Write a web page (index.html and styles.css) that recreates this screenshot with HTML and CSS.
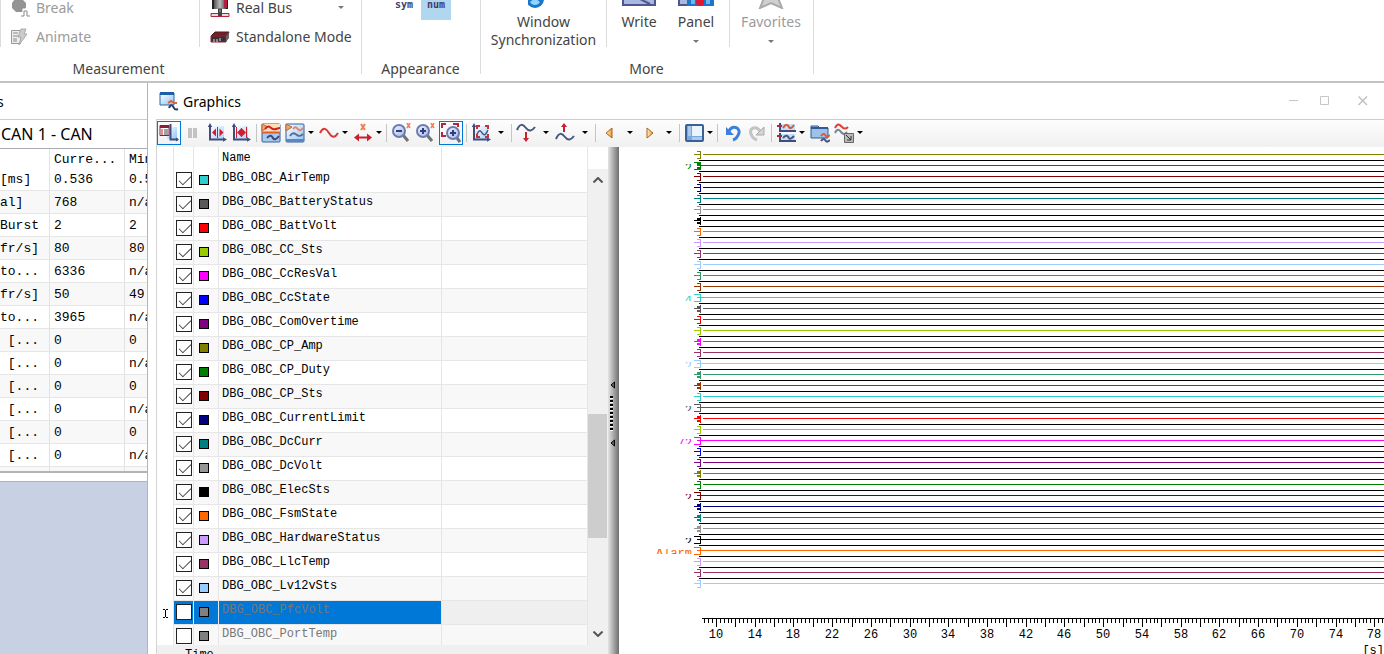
FILE: index.html
```html
<!DOCTYPE html>
<html lang="en">
<head>
<meta charset="utf-8">
<title>Graphics</title>
<link rel="stylesheet" href="styles.css">
</head>
<body>
<svg class="defs" width="0" height="0" aria-hidden="true">
  <defs>
    <linearGradient id="blue" x1="0" y1="0" x2="1" y2="1"><stop offset="0" stop-color="#ffffff"/><stop offset="1" stop-color="#8fc3f5"/></linearGradient>
    <linearGradient id="lens" x1="0" y1="0" x2="1" y2="1"><stop offset="0" stop-color="#f4f7ff"/><stop offset="1" stop-color="#a3b5e0"/></linearGradient>
    <linearGradient id="gold" x1="0" y1="0" x2="1" y2="0"><stop offset="0" stop-color="#fff0c8"/><stop offset="1" stop-color="#ef9a2e"/></linearGradient>
    <linearGradient id="steel" x1="0" y1="0" x2="1" y2="0"><stop offset="0" stop-color="#444"/><stop offset=".5" stop-color="#bbb"/><stop offset="1" stop-color="#333"/></linearGradient>
    <symbol id="axes" viewBox="0 0 20 20"><path d="M3 3h14v13H3z" fill="url(#blue)" opacity=".7"/><path d="M3 2v14.500h14" fill="none" stroke="#3f4d7e" stroke-width="2"/><path d="M3 0L0.800 4h4.400zM20 16.500l-4-2.200v4.400z" fill="#3f4d7e"/></symbol>
  </defs>
</svg>
<header class="ribbon">
  <section class="group group-measure">
    <div class="group-body">
      <span class="rule rule-first"></span>
      <div class="stack stack-left">
        <button class="tool off" disabled><svg width="20" height="20" viewBox="0 0 20 20"><path d="M5 1h7l4 4v5l-4 4H6l-4-4V5z" fill="#949494"/><path d="M11 18h3v-6h3v6h3" fill="none" stroke="#fff" stroke-width="3"/><path d="M11 18h3v-5h3v5h3" fill="none" stroke="#888"/></svg>Break</button>
        <button class="tool off" disabled><svg width="20" height="20" viewBox="0 0 20 20"><path d="M1.500 3.500h9v13h-9z" fill="#eee" stroke="#999"/><path d="M3 6h5M3 9h5M3 12h4M3 14h4" stroke="#888"/><path d="M11 2h5l-2 5h3l-8 11 2-8H8z" fill="#ccc" stroke="#aaa"/></svg>Animate</button>
      </div>
      <span class="rule"></span>
      <div class="stack stack-right">
        <button class="tool wide"><svg width="20" height="20" viewBox="0 0 20 20"><path d="M3 0h14v11H3z" fill="url(#steel)"/><path d="M3 0v11M17 0v11" stroke="#222" stroke-width="2"/><path d="M14 1h3v9h-3z" fill="#b61c3e"/><path d="M8.500 11h3v6h-3z" fill="#777" stroke="#333"/><path d="M1 15.500h18v3H1z" fill="#ddd" stroke="#b8203f"/><path d="M8 14h4v4H8z" fill="#444"/></svg>Real Bus<i class="caret"></i></button>
        <button class="tool"><svg width="20" height="20" viewBox="0 0 20 20"><path d="M1 9l4-4h14l-2 4z" fill="#7b1b30" stroke="#421"/><path d="M1 9h15v6H1z" fill="#333" stroke="#a31c3c"/><path d="M16 9l3-4v6l-3 4z" fill="#666"/><path d="M4 12v3M7 12v3M10 11v3" stroke="#ddd"/></svg>Standalone Mode</button>
      </div>
    </div>
    <h2>Measurement</h2>
  </section>
  <section class="group group-look">
    <div class="group-body look"><button class="mode">sym</button><button class="mode picked">num</button></div>
    <h2>Appearance</h2>
  </section>
  <section class="group group-more">
    <div class="group-body">
      <button class="big big-sync"><svg width="32" height="32" viewBox="0 0 32 32"><circle cx="7" cy="22" r="9" fill="#1c76c8"/><path d="M2 25c2 4 8 4 10 0l-5-4z" fill="#8fd5ff"/></svg><span>Window</span><span>Synchronization</span></button>
      <span class="rule"></span>
      <button class="big big-write"><svg width="34" height="32" viewBox="0 0 34 32"><path d="M1 4h32v24H1z" fill="#a9b8e0" stroke="#4d578e" stroke-width="2"/><path d="M18 22l10 5" stroke="#4d578e" stroke-width="2"/></svg><span>Write</span><span></span></button>
      <button class="big big-panel"><svg width="36" height="32" viewBox="0 0 36 32"><path d="M1 10h10v18H1z" fill="#a9b8e0" stroke="#4d578e" stroke-width="2"/><path d="M9 4h27v25H9z" fill="#1e74c6"/><circle cx="22" cy="25" r="4" fill="#e5172f"/><path d="M13 23h4v4h-4zM28 23h4v4h-4z" fill="#69b8f1"/></svg><span>Panel</span><span><i class="caret"></i></span></button>
      <span class="rule"></span>
      <button class="big big-fav off" disabled><svg width="32" height="32" viewBox="0 0 32 32"><path d="M16 4l4 9 10 1-7 7 4 10-11-5-11 5 4-10-7-7 10-1z" fill="#d0d0d0" stroke="#aaa" stroke-width="2"/></svg><span>Favorites</span><span><i class="caret"></i></span></button>
    </div>
    <h2>More</h2>
  </section>
</header>

<main class="desk">
  <aside class="side">
    <div class="side-title">s</div>
    <div class="side-channel">CAN 1 - CAN</div>
    <div class="stats-box">
      <table class="stats">
        <colgroup><col class="c-label"><col class="c-cur"><col class="c-min"></colgroup>
        <thead><tr><th></th><th>Curre...</th><th>Min</th></tr></thead>
        <tbody id="stats"></tbody>
      </table>
    </div>
    <div class="side-gap"></div>
    <div class="side-back"></div>
  </aside>

  <section class="window">
    <header class="titlebar">
      <svg width="20" height="20" viewBox="0 0 20 20"><path d="M1 2h14v12H1z" fill="url(#blue)" stroke="#2b67a8"/><path d="M1 1h14v3H1z" fill="#1c5fa8"/><path d="M9 12l3-2 3 2 3 0" fill="none" stroke="#e0622e" stroke-width="2"/><path d="M10 17c2-5 4-2 5 0s2 2 4 1" fill="none" stroke="#34406e" stroke-width="2"/></svg>
      <h1>Graphics</h1>
      <button class="sys" aria-label="Minimize"><svg width="10" height="10"><path d="M0 4.500h9" stroke="#c6c6c6"/></svg></button>
      <button class="sys" aria-label="Maximize"><svg width="10" height="10"><path d="M.5.5h8v8h-8z" fill="none" stroke="#c6c6c6"/></svg></button>
      <button class="sys sys-close" aria-label="Close"><svg width="10" height="10"><path d="M.5.5l8.500 8.500M9 .5L.5 9" stroke="#c0c0c0" stroke-width="1.500"/></svg></button>
    </header>

    <nav class="toolbar" aria-label="Graphics tools">
      <button class="ico on" aria-label="Legend"><svg width="20" height="20" viewBox="0 0 20 20"><path d="M8 4h10v12H8z" fill="url(#blue)"/><path d="M1 2.500h9v10H1z" fill="#fff" stroke="#8d1d36"/><path d="M1 2h9v3H1z" fill="#8d1d36"/><path d="M2 7h2M2 9h2M2 11h2" stroke="#c22"/><path d="M5 7h4M5 9h4M5 11h4" stroke="#445"/><path d="M11.500 1v15.500H19" fill="none" stroke="#3f4d7e" stroke-width="2"/><path d="M20 16.500l-3-2v4z" fill="#3f4d7e"/></svg></button>
      <button class="ico" aria-label="Pause"><svg width="20" height="20" viewBox="0 0 20 20"><path d="M5 5h4v10H5zM10 5h4v10h-4z" fill="#c3c3c3"/></svg></button>
      <button class="ico" aria-label="Fit"><svg width="20" height="20" viewBox="0 0 20 20"><use href="#axes"/><path d="M10.500 4v11" stroke="#cc1f2f" stroke-width="1"/><path d="M5 9.500l4-4v8zM16.500 9.500l-4-4v8z" fill="#cc1f2f"/></svg></button>
      <button class="ico" aria-label="Fit all"><svg width="20" height="20" viewBox="0 0 20 20"><use href="#axes"/><path d="M5.500 4v11M15.500 4v11M10.500 5v9" stroke="#cc1f2f"/><path d="M6 9.500l4-4v8zM15 9.500l-4-4v8z" fill="#cc1f2f"/></svg></button>
      <span class="sep"></span>
      <button class="ico" aria-label="Separate"><svg width="20" height="20" viewBox="0 0 20 20"><rect x="1" y="1" width="18" height="18" rx="1" fill="#a9c9ee" stroke="#355e96"/><path d="M1 1h18v8H1z" fill="#ffe0b4"/><path d="M1 1l6 3-6 4z" fill="#f4ad45" stroke="#a66"/><path d="M1 9.500h18" stroke="#e25a28" stroke-width="2"/><path d="M4 6c4-5 5-1 8 0s4-1 7-1" fill="none" stroke="#cf2325" stroke-width="2"/><path d="M6 15c3-4 5-2 6 0s3 2 6-2" fill="none" stroke="#3a4878" stroke-width="2"/></svg></button>
      <button class="ico" aria-label="Combined"><svg width="20" height="20" viewBox="0 0 20 20"><rect x="1" y="1" width="18" height="18" rx="1" fill="url(#blue)" stroke="#355e96"/><path d="M1 16h18v3H1z" fill="#5a87bd"/><path d="M1 1l6 3-6 4z" fill="#f4ad45" stroke="#a66"/><path d="M8 6c3-4 4 0 6 1s3-1 4-2" fill="none" stroke="#d68a7a" stroke-width="2"/><path d="M5 13c3-5 5-2 7-1s3 2 6-1" fill="none" stroke="#5a6b9b" stroke-width="2"/></svg></button>
      <button class="drop" aria-label="View options"></button>
      <button class="ico gap" aria-label="Line type"><svg width="20" height="20" viewBox="0 0 20 20"><path d="M1 10C4 4 7 5 10 10s6 5 9 0" fill="none" stroke="#d93a38" stroke-width="2"/></svg></button>
      <button class="drop" aria-label="Line options"></button>
      <button class="ico gap" aria-label="X axis"><svg width="20" height="20" viewBox="0 0 20 20"><path d="M8 1l4 6M12 1L8 7" stroke="#f37c50" stroke-width="2"/><path d="M4 14.500h13" stroke="#c91f2e" stroke-width="2"/><path d="M1 14.500l5-4v8zM19 14.500l-5-4v8z" fill="#c91f2e"/></svg></button>
      <button class="drop" aria-label="X axis options"></button>
      <span class="sep"></span>
      <button class="ico" aria-label="Zoom out"><svg width="20" height="20" viewBox="0 0 20 20"><path d="M12 12l5 6" stroke="#6f7278" stroke-width="3"/><circle cx="8" cy="8" r="6" fill="url(#lens)" stroke="#6a7cb2" stroke-width="2"/><path d="M5 8h6" stroke="#2c3f86" stroke-width="2"/><path d="M16 0l3 5M19 0l-3 5" stroke="#f37c50" stroke-width="1.500"/></svg></button>
      <button class="ico" aria-label="Zoom in"><svg width="20" height="20" viewBox="0 0 20 20"><path d="M12 12l5 6" stroke="#6f7278" stroke-width="3"/><circle cx="8" cy="8" r="6" fill="url(#lens)" stroke="#6a7cb2" stroke-width="2"/><path d="M5 8h6M8 5v6" stroke="#2c3f86" stroke-width="2"/><path d="M16 0l3 5M19 0l-3 5" stroke="#f37c50" stroke-width="1.500"/></svg></button>
      <button class="ico on gap" aria-label="Zoom area"><svg width="20" height="20" viewBox="0 0 20 20"><path d="M1 5V1h4M12 1h5v3M1 9v4h4" fill="none" stroke="#b3263f" stroke-width="2"/><path d="M16 15l3 4" stroke="#6f7278" stroke-width="3"/><circle cx="12" cy="10" r="6" fill="url(#lens)" stroke="#6a7cb2" stroke-width="2"/><path d="M9 10h6M12 7v6" stroke="#2c3f86" stroke-width="2"/></svg></button>
      <span class="sep"></span>
      <button class="ico" aria-label="Measure area"><svg width="20" height="20" viewBox="0 0 20 20"><use href="#axes"/><path d="M6 6V3h3M14 3h3v3M6 11v3h3M14 14h3v-3" fill="none" stroke="#c73042" stroke-width="2"/><path d="M6 11c3-6 4-2 6 0s3 0 5-4" fill="none" stroke="#45547f" stroke-width="1.500"/></svg></button>
      <button class="drop far" aria-label="Area options"></button>
      <span class="sep"></span>
      <button class="ico" aria-label="Shift down"><svg width="20" height="20" viewBox="0 0 20 20"><path d="M1 7C4 0 7 1 10 5s6 3 9-1" fill="none" stroke="#47547f" stroke-width="2"/><path d="M10 9v6" stroke="#c8202c" stroke-width="2"/><path d="M10 19l-3-4h6z" fill="#c8202c"/></svg></button>
      <button class="drop far" aria-label="Shift down options"></button>
      <button class="ico" aria-label="Shift up"><svg width="20" height="20" viewBox="0 0 20 20"><path d="M1 16c3-7 6-6 9-2s6 3 9-1" fill="none" stroke="#47547f" stroke-width="2"/><path d="M9 4v5" stroke="#c8202c" stroke-width="2"/><path d="M9 0l3 4H6z" fill="#c8202c"/></svg></button>
      <button class="drop far" aria-label="Shift up options"></button>
      <span class="sep"></span>
      <button class="ico" aria-label="Previous"><svg width="20" height="20" viewBox="0 0 20 20"><path d="M12 5v10l-6-5z" fill="url(#gold)" stroke="#a8641c"/></svg></button>
      <button class="drop far" aria-label="Previous options"></button>
      <button class="ico" aria-label="Next"><svg width="20" height="20" viewBox="0 0 20 20"><path d="M8 5v10l6-5z" fill="url(#gold)" stroke="#a8641c"/></svg></button>
      <button class="drop far" aria-label="Next options"></button>
      <span class="sep"></span>
      <button class="ico" aria-label="Layout"><svg width="20" height="20" viewBox="0 0 20 20"><rect x="2" y="2" width="17" height="16" rx="1" fill="#7ba7da" stroke="#3a6197" stroke-width="2"/><path d="M8 3h10v10H8z" fill="#eaf4ff"/><path d="M4 3h3v10H4zM8 14h10v3H8z" fill="#a9caee"/></svg></button>
      <button class="drop" aria-label="Layout options"></button>
      <span class="sep"></span>
      <button class="ico" aria-label="Undo"><svg width="20" height="20" viewBox="0 0 20 20"><path d="M7 8c3-6 11-4 10 2-1 3-3 6-6 7" fill="none" stroke="#3f7fdc" stroke-width="3"/><path d="M4 4v8h8z" fill="#3f7fdc"/></svg></button>
      <button class="ico" aria-label="Redo"><svg width="20" height="20" viewBox="0 0 20 20"><path d="M14 8C10 2 3 5 5 11c1 3 3 5 6 6" fill="none" stroke="#c4c4c4" stroke-width="3"/><path d="M18 4v8h-8z" fill="#d4d4d4" stroke="#aaa"/></svg></button>
      <span class="sep"></span>
      <button class="ico" aria-label="Two axes"><svg width="20" height="20" viewBox="0 0 20 20"><path d="M4 1h15v7H4zM4 11h15v7H4z" fill="#c5def7"/><path d="M4 0v8h16M4 10v8h16" fill="none" stroke="#3f4d7e" stroke-width="2"/><path d="M1 3h5M1 13h5" stroke="#b3263f" stroke-width="2"/><path d="M7 5c3-5 5-3 6-1s3 1 5-2" fill="none" stroke="#e0552e" stroke-width="2"/><path d="M7 15c3-4 5-2 6 0s3 0 5-2" fill="none" stroke="#47547f" stroke-width="2"/></svg></button>
      <button class="drop" aria-label="Axes options"></button>
      <button class="ico gap" aria-label="Open"><svg width="20" height="20" viewBox="0 0 20 20"><path d="M1 3h7l2 2h8v10H1z" fill="#9cc2ea" stroke="#315b92"/><path d="M1 5h17" stroke="#315b92" stroke-width="2"/><path d="M11 13c3-4 4-1 5 0s2 1 4-1" fill="none" stroke="#df5a38" stroke-width="2"/><path d="M11 18c3-4 4-1 5 0s2 1 4-1" fill="none" stroke="#47547f" stroke-width="2"/></svg></button>
      <button class="ico" aria-label="Export"><svg width="20" height="20" viewBox="0 0 20 20"><path d="M1 5c3-6 5-3 7-1s4 2 6 0" fill="none" stroke="#df4038" stroke-width="2"/><path d="M1 10c3-6 5-2 7 0s3 1 5-1" fill="none" stroke="#7b8296" stroke-width="2"/><path d="M10.500 10.500h9v9h-9z" fill="#bbb" stroke="#666"/><path d="M12 12l5 5M17 13v4h-4" fill="none" stroke="#333"/></svg></button>
      <button class="drop" aria-label="Export options"></button>
    </nav>

    <div class="content">
      <div class="legend">
        <div class="legend-main">
          <div class="gutter"><svg width="7" height="9" viewBox="0 0 7 9"><path d="M1 .5h2M4 .5h2M3.500 1v7M1 8.500h2M4 8.500h2" stroke="#000" fill="none"/></svg></div>
          <table class="signals">
            <colgroup><col class="s-check"><col class="s-colour"><col class="s-name"><col class="s-rest"></colgroup>
            <thead><tr><th></th><th></th><th>Name</th><th></th></tr></thead>
            <tbody id="signals"></tbody>
          </table>
          <div class="scroll">
            <svg width="10" height="6" viewBox="0 0 10 6"><path d="M.5 5.500L5 1l4.500 4.500" fill="none" stroke="#555" stroke-width="2"/></svg>
            <div class="track"><span class="thumb"></span></div>
            <svg width="10" height="6" viewBox="0 0 10 6"><path d="M.5.5L5 5 9.500.5" fill="none" stroke="#555" stroke-width="2"/></svg>
          </div>
        </div>
        <div class="legend-foot">Time</div>
      </div>
      <div class="splitter"><svg width="6" height="8"><path d="M4.500 1v6L1 4z" fill="#666" stroke="#000"/></svg><span class="grip"></span><svg width="6" height="8"><path d="M4.500 1v6L1 4z" fill="#666" stroke="#000"/></svg></div>
      <div class="plot"><svg id="plot" width="100%" height="100%" role="img" aria-label="Signal traces over time"></svg></div>
    </div>
  </section>
</main>
<script src="script.js"></script>
</body>
</html>
```
FILE: styles.css
```css
* { box-sizing: border-box; }
html, body { height: 100%; }
body {
  margin: 0;
  display: flex;
  flex-direction: column;
  overflow: hidden;
  background: #fff;
  color: #000;
  font-family: "Noto Sans", "Open Sans", sans-serif;
  font-size: 14px;
}
button {
  margin: 0;
  padding: 0;
  border: 0;
  background: none;
  color: inherit;
  font: inherit;
}
.defs { position: absolute; }

/* Ribbon */
.ribbon {
  display: flex;
  flex: none;
  border-bottom: 2px solid #c3c3c3;
  color: #444;
  overflow: hidden;
}
.group { flex: none; position: relative; }
.group::after {
  content: "";
  position: absolute;
  top: 0;
  right: 0;
  width: 1px;
  height: 74px;
  background: #dcdcdc;
}
.group-measure { width: 485px; margin-left: -123px; }
.group-look { width: 119px; }
.group-more { width: 333px; }
.group-body {
  display: flex;
  align-items: flex-end;
  height: 52px;
  overflow: hidden;
}
.group h2 {
  margin: 5px 0 0;
  padding-right: 2px;
  font-size: 14px;
  font-weight: 400;
  line-height: 24px;
  text-align: center;
}
.rule { flex: none; width: 1px; height: 47px; align-self: flex-start; background: #dcdcdc; }
.rule-first { margin-left: 123px; }
.stack { display: flex; flex-direction: column; padding-bottom: 1px; }
.stack-left { width: 198px; padding-left: 9px; }
.stack-right { padding-left: 10px; }
.tool { display: flex; align-items: center; gap: 6px; height: 29px; white-space: nowrap; }
.wide .caret { margin-left: auto; margin-right: 8px; }
.off { color: #9b9b9b; }
.caret {
  display: inline-block;
  border: 3px solid transparent;
  border-top-color: #777;
  border-bottom: 0;
}
.look { align-items: flex-start; padding-left: 27px; }
.mode {
  width: 30px;
  height: 20px;
  padding-bottom: 10px;
  color: #3d3d70;
  font-family: "DejaVu Sans Mono", monospace;
  font-size: 10px;
  font-weight: 700;
  line-height: 10px;
}
.picked { margin-left: 2px; background: #b0d6f0; }
.big {
  display: flex;
  flex-direction: column;
  align-items: center;
  flex: none;
  padding-bottom: 3px;
  line-height: 18px;
}
.big svg { flex: none; margin-bottom: 4px; }
.big span { height: 18px; }
.big .caret { vertical-align: middle; }
.big-sync { width: 125px; }
.big-write { width: 64px; }
.big-panel { width: 50px; margin-right: 8px; }
.big-fav { width: 82px; }

/* Workspace */
.desk { display: flex; flex: 1; min-height: 0; }
.side {
  display: flex;
  flex-direction: column;
  flex: none;
  width: 148px;
  border-right: 1px solid #b4b4b4;
  overflow: hidden;
  white-space: nowrap;
}
.side-title { height: 37px; border-bottom: 1px solid #ccc; line-height: 38px; text-indent: -3px; }
.side-channel { height: 29px; border-bottom: 1px solid #a9adb5; font-size: 16px; line-height: 28px; padding-left: 1px; }
.stats-box { height: 324px; overflow: hidden; border-bottom: 2px solid #b4b4b4; }
.side-gap { height: 8px; }
.side-back { flex: 1; border-top: 1px solid #b4b4b4; background: #c8d1e3; }
.stats, .signals { border-collapse: separate; border-spacing: 0; table-layout: fixed; }
.stats { width: 200px; font-family: "Liberation Mono", monospace; font-size: 13px; }
.c-label { width: 50px; }
.c-cur { width: 75px; }
.c-min { width: 75px; }
.stats th, .stats td {
  height: 23px;
  padding: 2px 0 0 4px;
  border-right: 1px solid #e2e2e2;
  border-bottom: 1px solid #e6e6e6;
  font-weight: 400;
  text-align: left;
  line-height: 20px;
  white-space: pre;
  overflow: hidden;
}
.stats th { height: 19px; padding-top: 3px; border-bottom: 0; line-height: 16px; }
.stats td:first-child { padding-left: 0; }
.stats tbody tr:nth-child(even) { background: #f8f8f8; }

/* Graphics window */
.window { display: flex; flex-direction: column; flex: 1; min-width: 0; padding-left: 8px; }
.titlebar { display: flex; align-items: center; flex: none; height: 36px; padding: 0 16px 0 3px; }
.titlebar h1 { flex: 1; margin: 0 0 0 4px; font-size: 14px; font-weight: 400; }
.sys { display: flex; width: 10px; margin-left: 21px; }
.sys-close { margin-left: 28px; }
.toolbar {
  display: flex;
  align-items: center;
  flex: none;
  height: 28px;
  padding-bottom: 2px;
  border-top: 1px solid #ccc;
  border-left: 1px solid #d4d4d4;
  background: linear-gradient(#fdfdfd, #f0f0f0);
}
.ico { display: flex; align-items: center; justify-content: center; flex: none; width: 24px; height: 24px; }
.on { border: 1px solid #0078d7; }
.gap { margin-left: 2px; }
.sep { flex: none; width: 1px; height: 18px; margin: 0 2px 0 3px; background: #c5c5c5; }
.drop { display: flex; align-items: center; justify-content: center; flex: none; width: 8px; height: 24px; }
.drop::before { content: ""; border: 3px solid transparent; border-top-color: #000; border-bottom: 0; }
.far { width: 15px; }
.content { display: flex; flex: 1; min-height: 0; border-left: 1px solid #d4d4d4; }
.legend { display: flex; flex-direction: column; flex: none; width: 451px; background: #f0f0f0; overflow: hidden; }
.legend-main { display: flex; flex: 1; min-height: 0; overflow: hidden; background: #fff; }
.gutter { display: flex; align-items: flex-end; justify-content: center; width: 16px; padding-bottom: 27px; }
.signals { width: 415px; height: 100%; align-self: flex-start; font-family: "Liberation Mono", monospace; font-size: 12px; }
.s-check { width: 21px; }
.s-colour { width: 25px; }
.s-name { width: 223px; }
.s-rest { width: 146px; }
.signals th, .signals td {
  height: 24px;
  padding: 0;
  border-right: 1px solid #e6e6e6;
  border-bottom: 1px solid #e6e6e6;
  font-weight: 400;
  line-height: 18px;
  text-align: left;
  vertical-align: top;
}
.signals th { height: 22px; border-bottom: 0; line-height: 22px; }
.signals th:nth-child(3), .signals td:nth-child(3) { padding-left: 3px; }
.signals th:first-child, .signals td:first-child { border-left: 1px solid #e6e6e6; }
.signals tbody tr:nth-child(even) { background: #f8f8f8; }
.signals .dim { color: #777; }
.signals .sel td { background: #0078d7; }
.signals .sel td:last-child { background: #efefef; }
.tick {
  appearance: none;
  display: block;
  width: 16px;
  height: 16px;
  margin: 3px 0 0 2px;
  border: 1px solid #222;
  background: #fff;
}
.tick:checked::before {
  content: "";
  display: block;
  width: 11px;
  height: 5px;
  margin: 3px 0 0 2px;
  border: solid #444;
  border-width: 0 0 1px 1px;
  transform: rotate(-45deg);
}
.swatch { display: block; width: 10px; height: 10px; margin: 6px 0 0 5px; border: 1px solid #000; }
.scroll {
  display: flex;
  flex-direction: column;
  align-items: center;
  flex: none;
  width: 20px;
  margin-top: 22px;
  padding: 8px 1px 8px 0;
  background: #f0f0f0;
}
.scroll svg { flex: none; }
.track { display: flex; flex-direction: column; flex: 1; width: 19px; padding: 231px 0 93px; }
.thumb { flex: 1; background: #cdcdcd; }
.legend-foot { flex: none; height: 9px; padding: 3px 0 0 28px; font: 12px/14px "Liberation Mono", monospace; }
.splitter {
  display: flex;
  flex-direction: column;
  align-items: flex-start;
  justify-content: center;
  gap: 7px;
  flex: none;
  width: 11px;
  padding: 26px 0 0 2px;
  background: linear-gradient(90deg, #e4e4e4, #6e6e6e);
}
.grip { width: 3px; height: 36px; background: repeating-linear-gradient(#000 0 2px, #fff 2px 3px, transparent 3px 4px); }
.plot { flex: 1; min-width: 0; overflow: hidden; }
.plot svg { display: block; font-family: "Liberation Mono", monospace; font-size: 12px; }
```
FILE: script.js
```javascript
const stats = [
  ["[ms]", "0.536", "0.531"], ["al]", "768", "n/a"], ["Burst", "2", "2"],
  ["fr/s]", "80", "80"], ["to...", "6336", "n/a"], ["fr/s]", "50", "49"],
  ["to...", "3965", "n/a"], [" [...", "0", "0"], [" [...", "0", "n/a"],
  [" [...", "0", "0"], [" [...", "0", "n/a"], [" [...", "0", "0"],
  [" [...", "0", "n/a"], ["", "", ""]
];
document.getElementById("stats").innerHTML = stats
  .map(row => `<tr>${row.map(cell => `<td>${cell}</td>`).join("")}</tr>`)
  .join("");

const signals = [
  ["AirTemp", "#33cccc"], ["BatteryStatus", "#595959"], ["BattVolt", "#ff0000"],
  ["CC_Sts", "#99cc00"], ["CcResVal", "#ff00ff"], ["CcState", "#0000ff"],
  ["ComOvertime", "#800080"], ["CP_Amp", "#808000"], ["CP_Duty", "#008000"],
  ["CP_Sts", "#800000"], ["CurrentLimit", "#000080"], ["DcCurr", "#008080"],
  ["DcVolt", "#969696"], ["ElecSts", "#000000"], ["FsmState", "#ff6600"],
  ["HardwareStatus", "#cc99ff"], ["LlcTemp", "#993366"], ["Lv12vSts", "#99ccff"],
  ["PfcVolt", "#808080", "dim sel"], ["PortTemp", "#808080", "dim"]
];
document.getElementById("signals").innerHTML = signals
  .map(([name, colour, state = ""], i) => `<tr class="${state}">
    <td><input class="tick" type="checkbox" id="sig${i}" ${state ? "" : "checked"}></td>
    <td><span class="swatch" style="background:${colour}"></span></td>
    <td><label for="sig${i}">DBG_OBC_${name}</label></td><td></td></tr>`)
  .join("");

// Each trace: colour, scale style (n narrow, f filled, w wide), scale label
const traces = [
  ["#808000", "n"], ["#008000", "wf", "2"], ["#800000", "n"], ["#000080", "n"],
  ["#008080", "n"], ["#969696", "n"], ["#000000", "f"], ["#ff6600", "n"],
  ["#cc99ff", "n"], ["#993366", "n"], ["#99ccff", "n"], ["#339966", "n"],
  ["#993300", "n"], ["#33cccc", "w", "4"], ["#595959", "f"], ["#ff0000", "n"],
  ["#99cc00", "n"], ["#ff00ff", "f"], ["#993366", "n"], ["#99ccff", "w", "2"],
  ["#339966", "f"], ["#993300", "f"], ["#33cccc", "n"], ["#595959", "w", "2"],
  ["#ff0000", "f"], ["#99cc00", "n"], ["#ff00ff", "w", "72"], ["#0000ff", "n"],
  ["#800080", "n"], ["#808000", "f"], ["#008000", "n"], ["#800000", "w", "2"],
  ["#000080", "f"], ["#008080", "f"], ["#969696", "f"], ["#000000", "w", "2"],
  ["#ff6600", "w", "Alarm"], ["#cc99ff", "n"], ["#993366", "n"], ["#99ccff", "n"]
];
const rect = (x, y, w, h, fill) =>
  `<rect x="${x}" y="${y}" width="${w}" height="${h}" fill="${fill}"/>`;
const out = [];
const rowStep = 11;
const firstRow = 7;
traces.forEach(([colour, style, label], i) => {
  const y = firstRow + i * rowStep;
  const wide = style.includes("w");
  const stub = wide ? 75 : 78;
  out.push(rect(84, y, "100%", 1, colour));
  out.push(rect(81, y - 3, 1, 8, colour));
  out.push(rect(wide ? 78 : 75, y, 6, 1, colour));
  if (style.includes("f")) {
    out.push(rect(78, y - 2, 3, 2, colour), rect(78, y + 2, 3, 2, colour));
  }
  if (style !== "f") {
    out.push(rect(stub, y - 3, 81 - stub, 1, colour), rect(stub, y + 4, 81 - stub, 1, colour));
  }
  if (i < traces.length - 1) out.push(rect(80, y + 6, "100%", 1, "#000"));
  if (label) {
    out.push(`<svg x="0" y="${y - 1}" width="74" height="5"><text x="73" y="8" text-anchor="end" fill="${colour}">${label}</text></svg>`);
  }
});

const axisY = 471;
const tenAt = 97;
const perSecond = 9.68;
out.push(rect(83, axisY, "100%", 1, "#000"));
for (let n = -3; n < 500; n++) {
  const x = Math.round(tenAt + n * 0.4 * perSecond);
  out.push(rect(x, axisY, 1, n % 5 === 0 ? 9 : 5, "#000"));
  if (n >= 0 && n % 10 === 0) {
    out.push(`<text x="${x}" y="${axisY + 20}" text-anchor="middle">${10 + n * 0.4}</text>`);
  }
}
out.push(`<text x="100%" y="${axisY + 36}" text-anchor="end">[s]</text>`);
document.getElementById("plot").innerHTML = out.join("");
```
